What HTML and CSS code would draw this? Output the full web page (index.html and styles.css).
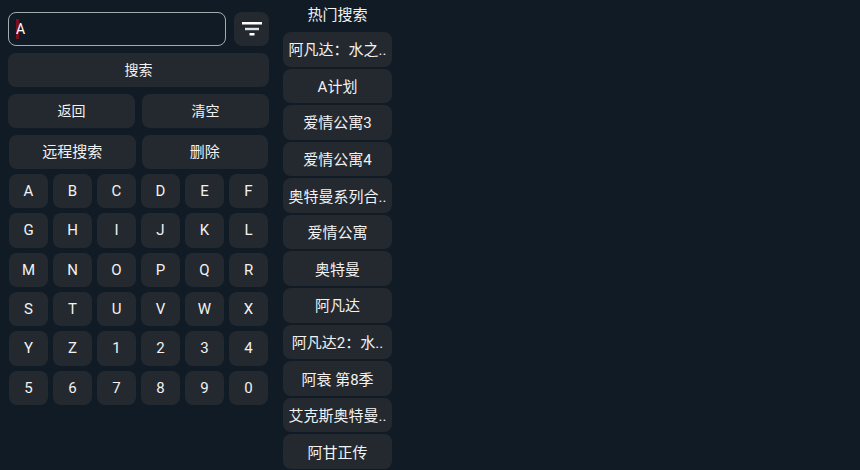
FILE: index.html
```html
<!DOCTYPE html>
<html lang="zh-CN">
<head>
  <meta charset="UTF-8">
  <meta name="viewport" content="width=device-width, initial-scale=1">
  <title>搜索</title>
  <link rel="stylesheet" href="styles.css">
</head>
<body>
  <div class="page">
    <form class="search" onsubmit="return false">
      <div class="search-row">
        <div class="search-box">
          <span class="cursor"></span>
          <input type="text" id="keyword" value="A" aria-label="搜索关键词">
        </div>
        <button type="button" class="filter" aria-label="筛选">
          <svg width="22" height="16" viewBox="0 0 22 16">
            <rect x="1" y="1" width="20" height="2.5" fill="#fff"/>
            <rect x="4" y="6.8" width="14" height="2.4" fill="#dfe3e4"/>
            <rect x="8.5" y="12" width="5" height="2.5" fill="#fff"/>
          </svg>
        </button>
      </div>
      <button type="submit" class="small-text">搜索</button>
      <div class="actions">
        <button type="button" class="small-text">返回</button>
        <button type="button" class="small-text">清空</button>
      </div>
      <div class="keyboard">
        <div class="actions tight">
          <button type="button">远程搜索</button>
          <button type="button">删除</button>
        </div>
        <div class="keys">
          <button type="button">A</button>
          <button type="button">B</button>
          <button type="button">C</button>
          <button type="button">D</button>
          <button type="button">E</button>
          <button type="button">F</button>
          <button type="button">G</button>
          <button type="button">H</button>
          <button type="button">I</button>
          <button type="button">J</button>
          <button type="button">K</button>
          <button type="button">L</button>
          <button type="button">M</button>
          <button type="button">N</button>
          <button type="button">O</button>
          <button type="button">P</button>
          <button type="button">Q</button>
          <button type="button">R</button>
          <button type="button">S</button>
          <button type="button">T</button>
          <button type="button">U</button>
          <button type="button">V</button>
          <button type="button">W</button>
          <button type="button">X</button>
          <button type="button">Y</button>
          <button type="button">Z</button>
          <button type="button">1</button>
          <button type="button">2</button>
          <button type="button">3</button>
          <button type="button">4</button>
          <button type="button">5</button>
          <button type="button">6</button>
          <button type="button">7</button>
          <button type="button">8</button>
          <button type="button">9</button>
          <button type="button">0</button>
        </div>
      </div>
    </form>

    <section class="hot">
      <h2>热门搜索</h2>
      <div class="hot-list">
        <button type="button">阿凡达：水之..</button>
        <button type="button">A计划</button>
        <button type="button">爱情公寓3</button>
        <button type="button">爱情公寓4</button>
        <button type="button">奥特曼系列合..</button>
        <button type="button">爱情公寓</button>
        <button type="button">奥特曼</button>
        <button type="button">阿凡达</button>
        <button type="button">阿凡达2：水..</button>
        <button type="button">阿衰 第8季</button>
        <button type="button">艾克斯奥特曼..</button>
        <button type="button">阿甘正传</button>
      </div>
    </section>

    <main class="results"></main>
  </div>
</body>
</html>
```
FILE: styles.css
```css
* { box-sizing: border-box; }
body {
  margin: 0; background-color: #111b26; color: #f2f2f2;
  font-family: Roboto, "Noto Sans CJK SC", sans-serif; font-size: 15px;
}
button {
  height: 34px; padding: 0; border: none; border-radius: 8px;
  background: #24292f; color: inherit; font: inherit; line-height: 20px; cursor: pointer;
}
.page {
  display: grid; grid-template-columns: 261px 109px 1fr; column-gap: 14px;
  min-height: 100vh; padding: 0 8px 1px;
}

/* search form and keyboard */
.search { display: flex; flex-direction: column; gap: 7px; padding-top: 12px; }
.search-row { display: flex; gap: 8px; }
.search-box { position: relative; flex: 1; }
.search-box input {
  position: relative; display: block; width: 100%; height: 34px; padding: 0 7px;
  border: 1px solid #a3adb0; border-radius: 8px; outline: none;
  background: transparent; color: #fff; font: inherit; font-size: 14px;
}
.cursor { position: absolute; left: 8px; top: 7px; width: 3px; height: 20px; background: #7a101c; }
.filter { display: flex; align-items: center; justify-content: center; width: 35px; }
.small-text { font-size: 14px; }
.actions { display: grid; grid-template-columns: 1fr 1fr; gap: 7px; }
.tight { gap: 6px; }
.keyboard { display: grid; gap: 5px; padding: 0 1px; }
.keys {
  display: grid; grid-template-columns: repeat(6, 1fr); grid-auto-rows: 1fr;
  gap: 5px; min-height: 231px;
}
.keys button { height: auto; }

/* hot searches */
.hot { display: flex; flex-direction: column; }
.hot h2 { margin: 0 0 2px; font-size: 15px; font-weight: normal; line-height: 30px; text-align: center; }
.hot-list { flex: 1; display: grid; grid-auto-rows: 1fr; gap: 2px; }
.hot-list button { height: auto; min-height: 34px; padding-top: 2px; white-space: nowrap; overflow: hidden; }
```
